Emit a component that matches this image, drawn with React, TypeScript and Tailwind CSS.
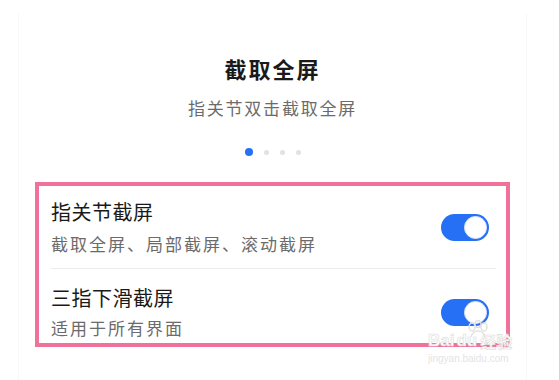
import { JSX } from 'react'

const FONT = { fontFamily: '"Noto Sans CJK SC", "Noto Sans", sans-serif' }

function Toggle(): JSX.Element {
  return (
    <div className="flex h-[27px] w-[48px] items-center justify-end rounded-full bg-[#2670f5] px-[2px]">
      <div className="h-[23px] w-[23px] rounded-full border border-[#d9e4fb] bg-white" />
    </div>
  )
}

function Watermark(): JSX.Element {
  return (
    <div className="pointer-events-none absolute left-[428px] top-[320px] w-[100px] select-none">
      <svg width="28" height="20" viewBox="0 0 28 20" className="absolute left-[36px] top-0">
        <g fill="none" stroke="#e2e2e2" strokeWidth="1.5">
          <ellipse cx="8" cy="7" rx="3" ry="4" />
          <ellipse cx="14" cy="4" rx="3" ry="3.5" />
          <ellipse cx="20" cy="7" rx="3" ry="4" />
          <path d="M7 17c1-4 4-6 7-6s6 2 7 6" />
        </g>
      </svg>
      <div
        className="mt-[12px] flex items-end text-[17px] font-bold leading-[18px]"
        style={{ fontFamily: '"Liberation Sans", "Noto Sans CJK SC", sans-serif', WebkitTextStroke: '0.6px #dedede', color: '#fbfbfb' }}
      >
        <span>Bai</span>
        <span className="ml-[2px]">du</span>
        <span className="ml-[3px] text-[16px]" style={{ fontFamily: '"Noto Sans CJK SC", sans-serif' }}>经验</span>
      </div>
      <div
        className="mt-[3px] text-[10px] leading-[12px] text-[#e4e4e4]"
        style={{ fontFamily: '"Liberation Sans", sans-serif' }}
      >
        jingyan.baidu.com
      </div>
    </div>
  )
}

export default function App(): JSX.Element {
  return (
    <div className="relative h-[380px] w-[559px] overflow-hidden bg-white" style={FONT}>
      <div className="ml-[18px] mt-[14px] h-[366px] w-[509px] border-x border-[#f7f7f7] pt-[39px]">
        <h1 className="text-center text-[22px] font-bold leading-[30px] tracking-[2px] text-[#1a1a1a]">
          截取全屏
        </h1>
        <p className="mt-[13px] text-center text-[17px] leading-[24px] tracking-[1.8px] text-[#6b6b6b]">
          指关节双击截取全屏
        </p>

        <div className="mt-[28px] flex h-[8px] items-center justify-center gap-[11px]">
          <span className="h-[8px] w-[8px] rounded-full bg-[#2670f5]" />
          <span className="h-[5px] w-[5px] rounded-full bg-[#e2e2e2]" />
          <span className="h-[5px] w-[5px] rounded-full bg-[#e2e2e2]" />
          <span className="h-[5px] w-[5px] rounded-full bg-[#e2e2e2]" />
        </div>

        <div className="ml-[16px] mt-[26px] h-[165px] w-[475px] border-4 border-[#f0729a]">
          <div className="flex items-center justify-between pl-[12px] pr-[17px] pt-[13px] pb-[12px]">
            <div>
              <div className="text-[20px] leading-[26px] tracking-[0.5px] text-[#1a1a1a]">指关节截屏</div>
              <div className="mt-[7px] text-[17px] leading-[24px] tracking-[2px] text-[#6b6b6b]">
                截取全屏、局部截屏、滚动截屏
              </div>
            </div>
            <Toggle />
          </div>
          <div className="ml-[12px] mr-[10px] h-px bg-[#ececec]" />
          <div className="flex items-center justify-between pl-[12px] pr-[17px] pt-[16px]">
            <div>
              <div className="text-[20px] leading-[26px] tracking-[0.5px] text-[#1a1a1a]">三指下滑截屏</div>
              <div className="mt-[5px] text-[17px] leading-[24px] tracking-[2px] text-[#6b6b6b]">
                适用于所有界面
              </div>
            </div>
            <Toggle />
          </div>
        </div>
      </div>
      <Watermark />
    </div>
  )
}
